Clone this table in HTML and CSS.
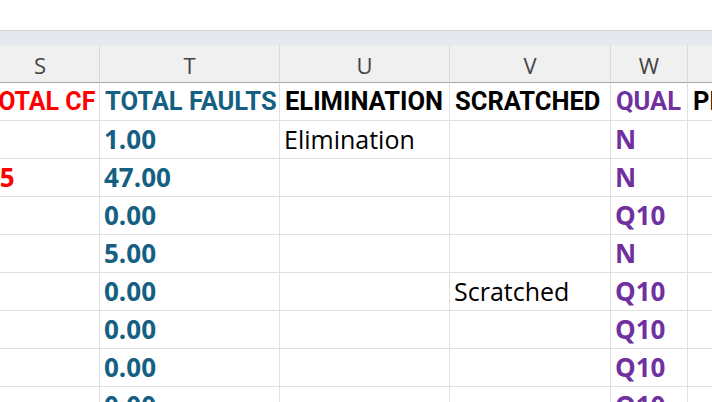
FILE: index.html
```html
<!DOCTYPE html>
<html lang="en">
<head>
<meta charset="utf-8">
<title>Sheet</title>
<link rel="stylesheet" href="styles.css">
</head>
<body>
<div class="formula"></div>
<div class="band"></div>
<div class="sheet">
  <div class="c col">S</div>
  <div class="c col">T</div>
  <div class="c col">U</div>
  <div class="c col">V</div>
  <div class="c col">W</div>
  <div class="c col"></div>

  <div class="c hd red first">TOTAL CF</div>
  <div class="c hd teal">TOTAL FAULTS</div>
  <div class="c hd">ELIMINATION</div>
  <div class="c hd">SCRATCHED</div>
  <div class="c hd purple">QUAL</div>
  <div class="c hd">PENALTY</div>

  <div class="c"></div>
  <div class="c num">1.00</div>
  <div class="c txt">Elimination</div>
  <div class="c"></div>
  <div class="c num purple">N</div>
  <div class="c"></div>

  <div class="c num red">45</div>
  <div class="c num">47.00</div>
  <div class="c"></div>
  <div class="c"></div>
  <div class="c num purple">N</div>
  <div class="c"></div>

  <div class="c"></div>
  <div class="c num">0.00</div>
  <div class="c"></div>
  <div class="c"></div>
  <div class="c num purple">Q10</div>
  <div class="c"></div>

  <div class="c"></div>
  <div class="c num">5.00</div>
  <div class="c"></div>
  <div class="c"></div>
  <div class="c num purple">N</div>
  <div class="c"></div>

  <div class="c"></div>
  <div class="c num">0.00</div>
  <div class="c"></div>
  <div class="c txt">Scratched</div>
  <div class="c num purple">Q10</div>
  <div class="c"></div>

  <div class="c"></div>
  <div class="c num">0.00</div>
  <div class="c"></div>
  <div class="c"></div>
  <div class="c num purple">Q10</div>
  <div class="c"></div>

  <div class="c"></div>
  <div class="c num">0.00</div>
  <div class="c"></div>
  <div class="c"></div>
  <div class="c num purple">Q10</div>
  <div class="c"></div>

  <div class="c"></div>
  <div class="c num">0.00</div>
  <div class="c"></div>
  <div class="c"></div>
  <div class="c num purple">Q10</div>
  <div class="c"></div>
</div>
</body>
</html>
```
FILE: styles.css
```css
html, body {
  margin: 0;
  padding: 0;
  background: #ffffff;
  overflow: hidden;
  height: 402px;
}

.formula {
  height: 30px;
  background: #ffffff;
  border-bottom: 1px solid #d2d2d2;
}

.band {
  height: 14px;
  background: #e5e8ee;
}

.sheet {
  display: grid;
  grid-template-columns: 119px 180px 170px 161px 77px 150px;
  grid-auto-rows: 38px;
  margin-left: -19px;
  width: max-content;
}

.c {
  box-sizing: border-box;
  border-right: 1px solid #e0e0e0;
  border-bottom: 1px solid #e0e0e0;
  display: flex;
  align-items: flex-end;
  padding: 0 0 6px 5px;
  white-space: nowrap;
  overflow: hidden;
  color: #000000;
  line-height: 25px;
}

.col {
  background: #f0f0f0;
  border-right-color: #dadada;
  border-bottom-color: #a8a8a8;
  justify-content: center;
  padding: 0 0 6px 0;
  font-family: "Open Sans", "Liberation Sans", sans-serif;
  font-size: 22px;
  line-height: 22px;
  color: #444444;
}

.hd {
  font-family: Roboto, "Liberation Sans", sans-serif;
  font-weight: 700;
  font-size: 25.5px;
  padding-bottom: 6px;
}

.hd.first {
  font-size: 25px;
  padding-left: 2px;
}

.num {
  font-family: "Open Sans", "Liberation Sans", sans-serif;
  font-weight: 700;
  font-size: 26px;
  padding-left: 4px;
  color: #156082;
}

.txt {
  font-family: "Open Sans", "Liberation Sans", sans-serif;
  font-size: 25px;
  padding-left: 4px;
}

.red { color: #ff0000; }
.teal { color: #156082; }
.purple { color: #7030a0; }
```
